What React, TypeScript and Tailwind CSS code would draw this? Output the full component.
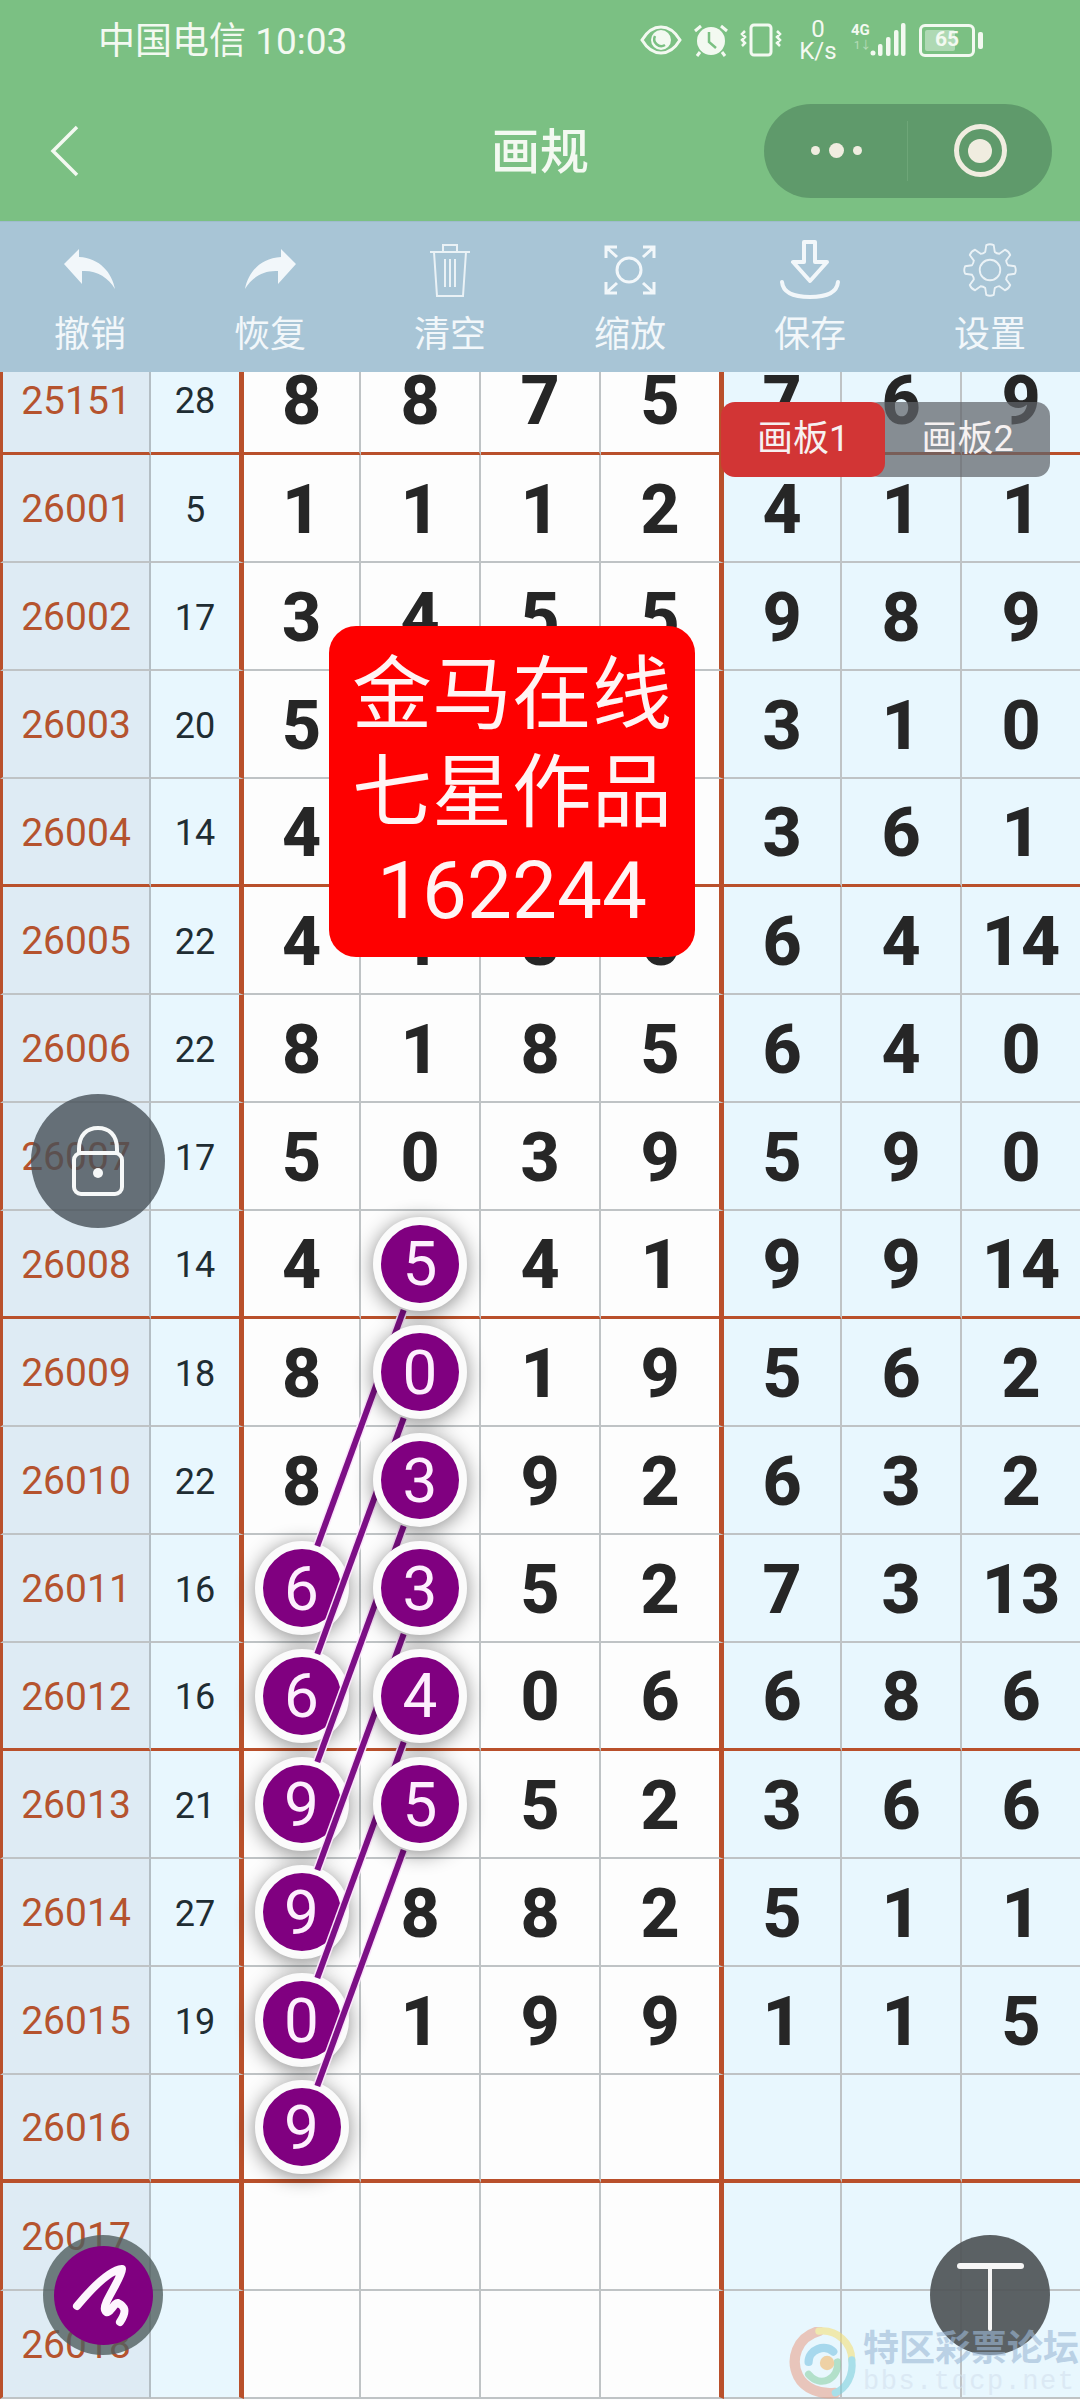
const rows: [string, string, string[]][] = [
  ['25151', '28', ['8', '8', '7', '5', '7', '6', '9']],
  ['26001', '5', ['1', '1', '1', '2', '4', '1', '1']],
  ['26002', '17', ['3', '4', '5', '5', '9', '8', '9']],
  ['26003', '20', ['5', '', '', '', '3', '1', '0']],
  ['26004', '14', ['4', '', '', '', '3', '6', '1']],
  ['26005', '22', ['4', '1', '8', '6', '6', '4', '14']],
  ['26006', '22', ['8', '1', '8', '5', '6', '4', '0']],
  ['26007', '17', ['5', '0', '3', '9', '5', '9', '0']],
  ['26008', '14', ['4', '*5', '4', '1', '9', '9', '14']],
  ['26009', '18', ['8', '*0', '1', '9', '5', '6', '2']],
  ['26010', '22', ['8', '*3', '9', '2', '6', '3', '2']],
  ['26011', '16', ['*6', '*3', '5', '2', '7', '3', '13']],
  ['26012', '16', ['*6', '*4', '0', '6', '6', '8', '6']],
  ['26013', '21', ['*9', '*5', '5', '2', '3', '6', '6']],
  ['26014', '27', ['*9', '8', '8', '2', '5', '1', '1']],
  ['26015', '19', ['*0', '1', '9', '9', '1', '1', '5']],
  ['26016', '', ['*9', '', '', '', '', '', '']],
  ['26017', '', ['', '', '', '', '', '', '']],
  ['26018', '', ['', '', '', '', '', '', '']],
];

// every ball in the right column joins the left column three rows further down
const links = [8, 9, 10, 11, 12, 13].map((r) => {
  const y = 347 + 108 * r + 55;
  return { x1: 420 - 16.3, y1: y + 44, x2: 301 + 16.3, y2: y + 324 - 44 };
});

// eight toothed gear outline, centred on 30,30
const gearPath = Array.from({ length: 8 }, (_, i) => {
  const a = (i * Math.PI) / 4;
  const pt = (r: number, d: number) =>
    `${(30 + r * Math.sin(a + d)).toFixed(1)} ${(30 - r * Math.cos(a + d)).toFixed(1)}`;
  return `${i === 0 ? 'M' : 'L'}${pt(20, -0.26)} L${pt(27, -0.15)} Q${pt(28.5, 0)} ${pt(27, 0.15)} L${pt(20, 0.26)} Q${pt(19, 0.39)} ${pt(20, 0.52)}`;
}).join(' ') + ' Z';

function Ball({ value, front }: { value: string; front?: boolean }) {
  return (
    <div
      className={`relative ${front ? 'z-30' : 'z-10'} flex h-[94px] w-[94px] items-center justify-center rounded-full border-[8px] border-[#fbfbfb] bg-[#800080] text-[62px] font-normal text-[#fdeffd] shadow-[0_3px_20px_rgba(0,0,0,0.45)]`}
    >
      {value}
    </div>
  );
}

function Row({ id, sum, cells, index }: { id: string; sum: string; cells: string[]; index: number }) {
  const thick = index % 4 === 0 && index <= 16;
  const bottom = thick ? 'border-b-4 border-b-[#b9502b]' : 'border-b-2 border-b-[#bfc3c5]';
  return (
    <div className="grid h-[108px] grid-cols-[151px_93px_117px_120px_120px_123px_118px_120px_118px]">
      <div className={`flex items-center justify-center border-l-[3px] border-r-2 border-l-[#b9502b] border-r-[#b4bec4] bg-[#deebf4] pt-[3px] text-[39px] text-[#b5532e] ${bottom}`}>
        {id}
      </div>
      <div className={`flex items-center justify-center border-r-[5px] border-r-[#b9502b] bg-[#e8f7fe] pt-[3px] text-[36px] text-[#1f2d33] ${bottom}`}>
        {sum}
      </div>
      {cells.map((c, i) => (
        <div
          key={i}
          className={`flex items-center justify-center text-[68px] font-extrabold text-[#262626] ${c.startsWith('*') ? '' : 'pt-[3px]'} ${bottom} ${i === 3 ? 'border-r-[5px] border-r-[#b9502b]' : i < 6 ? 'border-r-2 border-r-[#bfc3c5]' : ''} ${i >= 4 ? 'bg-[#e8f7fe]' : 'bg-[#fdfdfd]'}`}
        >
          {c.startsWith('*') ? <Ball value={c.slice(1)} front={i === 1} /> : c}
        </div>
      ))}
    </div>
  );
}

function StatusIcons() {
  return (
    <div className="flex items-center text-[#f3f9f1]">
      <svg width="42" height="30" viewBox="0 0 42 30" className="mr-[11px]">
        <path d="M2 15C8 5 14 2 21 2s13 3 19 13c-6 10-12 13-19 13S8 25 2 15Z" fill="none" stroke="currentColor" strokeWidth="3" />
        <circle cx="21" cy="15" r="10" fill="currentColor" />
        <path d="M15 11a7 7 0 0 0 10 9" fill="none" stroke="#7bc083" strokeWidth="2.5" />
      </svg>
      <svg width="36" height="34" viewBox="0 0 36 34" className="mr-[11px]">
        <circle cx="18" cy="18" r="14" fill="currentColor" />
        <path d="M16 9v10l7 6" fill="none" stroke="#7bc083" strokeWidth="2.5" />
        <path d="M2 8l6-5M34 8l-6-5M7 29l-3 4M29 29l3 4" stroke="currentColor" strokeWidth="3" />
      </svg>
      <svg width="42" height="34" viewBox="0 0 42 34" className="mr-[15px]">
        <rect x="11" y="2" width="20" height="30" rx="3" fill="none" stroke="currentColor" strokeWidth="3" />
        <path d="M5 8l-3 3 3 3-3 3 3 3-3 3M37 8l3 3-3 3 3 3-3 3 3 3" fill="none" stroke="currentColor" strokeWidth="2.5" />
      </svg>
      <div className="mr-[12px] flex w-[42px] flex-col items-center text-[24px] leading-[22px] font-normal">
        <span>0</span>
        <span>K/s</span>
      </div>
      <div className="relative mr-[12px] h-[34px] w-[56px]">
        <span className="absolute left-0 top-[-2px] text-[15px] leading-[18px] font-bold">4G</span>
        <span className="absolute left-[3px] top-[16px] text-[11px] leading-[14px] opacity-50">1↓</span>
        <svg width="56" height="34" viewBox="0 0 56 34" className="absolute left-0 top-0">
          <g fill="currentColor">
            <circle cx="22" cy="30" r="2.5" />
            <rect x="27" y="21" width="4.5" height="12" rx="2" />
            <rect x="35" y="14" width="4.5" height="19" rx="2" />
            <rect x="43" y="7" width="4.5" height="26" rx="2" />
            <rect x="50" y="0" width="4.5" height="33" rx="2" />
          </g>
        </svg>
      </div>
      <div className="relative flex h-[33px] w-[56px] items-center justify-center rounded-[6px] border-[3px] border-current text-[21px] font-bold">
        <div className="absolute bottom-[3px] left-[3px] top-[3px] w-[30px] rounded-[2px] bg-white/40" />
        <span className="relative">65</span>
      </div>
      <div className="ml-[3px] h-[17px] w-[5px] rounded-[2px] bg-current" />
    </div>
  );
}

const tools: [string, React.ReactNode][] = [
  [
    '撤销',
    <svg key="u" width="52" height="42" viewBox="0 0 52 42" fill="currentColor">
      <path d="M0 15L15 0V8C36 9 48 24 51 40C44 28 32 21 18 22V35Z" />
    </svg>,
  ],
  [
    '恢复',
    <svg key="r" width="52" height="42" viewBox="0 0 52 42" fill="currentColor">
      <path d="M52 15L37 0V8C16 9 4 24 1 40C8 28 20 21 34 22V35Z" />
    </svg>,
  ],
  [
    '清空',
    <svg key="c" width="42" height="56" viewBox="0 0 42 56" fill="none" stroke="currentColor" strokeWidth="2" opacity="0.9">
      <path d="M1 10H41M14 10V3H28V10M5 10L8 54H34L37 10M16 17V45M21 17V45M26 17V45" />
    </svg>,
  ],
  [
    '缩放',
    <svg key="s" width="54" height="52" viewBox="0 0 54 52" fill="none" stroke="currentColor" strokeWidth="3">
      <circle cx="26" cy="26" r="12" />
      <path d="M3 14V3H14M3 3L14 13M51 14V3H40M51 3L40 13M3 38V49H14M3 49L14 39M51 38V49H40M51 49L40 39" />
    </svg>,
  ],
  [
    '保存',
    <svg key="v" width="60" height="60" viewBox="0 0 60 60" fill="none" stroke="currentColor" strokeWidth="4">
      <path d="M24 2H35V22H47L30 41L13 22H24Z" strokeLinejoin="round" />
      <path d="M2 42C3 52 12 57 30 57S57 52 58 42" strokeLinecap="round" />
    </svg>,
  ],
  [
    '设置',
    <svg key="g" width="56" height="56" viewBox="0 0 60 60" fill="none" stroke="currentColor" strokeWidth="2" opacity="0.9">
      <path d={gearPath} strokeLinejoin="round" />
      <circle cx="30" cy="30" r="11" />
    </svg>,
  ],
];

function Swirl() {
  return (
    <svg width="72" height="72" viewBox="0 0 70 70" fill="none">
      <path d="M30 4C8 10 2 32 10 48C16 60 32 66 46 64" stroke="#e8a58f" strokeWidth="10" strokeLinecap="round" />
      <path d="M30 4C48 2 62 16 62 32" stroke="#f4e07a" strokeWidth="7" strokeLinecap="round" />
      <path d="M62 32C64 48 56 60 46 64" stroke="#7fd0dc" strokeWidth="7" strokeLinecap="round" />
      <path d="M20 46C32 60 50 50 48 34" stroke="#8fd1a8" strokeWidth="7" strokeLinecap="round" />
      <path d="M20 34C20 22 36 16 44 24" stroke="#7cc5e2" strokeWidth="8" strokeLinecap="round" />
      <circle cx="38" cy="35" r="7" fill="#f2b96b" />
    </svg>
  );
}

export default function App() {
  return (
    <div className="relative h-[2400px] w-[1080px] overflow-hidden bg-[#fdfdfd] font-['Roboto','Noto_Sans_CJK_SC',sans-serif]">
      {/* Header */}
      <header className="h-[221px] bg-[#7bc083] text-[#f3f9f1]">
        <div className="flex h-[80px] items-center justify-between pl-[98px] pr-[97px]">
          <span className="pt-[3px] text-[37px]">中国电信 10:03</span>
          <StatusIcons />
        </div>
        <div className="grid h-[141px] grid-cols-[1fr_auto_1fr] items-center">
          <div className="pl-[50px]">
            <svg width="30" height="52" viewBox="0 0 30 52" fill="none" stroke="currentColor" strokeWidth="3.5">
              <path d="M27 2L3 26L27 50" />
            </svg>
          </div>
          <h1 className="pt-[4px] text-[49px] font-medium">画规</h1>
          <div className="justify-self-end pr-[28px]">
            <div className="flex h-[94px] w-[288px] items-center rounded-full bg-[#5f9a6b]">
              <div className="flex h-[60px] w-[144px] items-center justify-center gap-[9px] border-r border-r-[#6ea678] pl-[2px]">
                <div className="h-[9px] w-[9px] rounded-full bg-[#f0ede0]" />
                <div className="h-[15px] w-[15px] rounded-full bg-[#f0ede0]" />
                <div className="h-[9px] w-[9px] rounded-full bg-[#f0ede0]" />
              </div>
              <div className="flex flex-1 items-center justify-center">
                <div className="flex h-[53px] w-[53px] items-center justify-center rounded-full border-[5px] border-[#f0ede0]">
                  <div className="h-[24px] w-[24px] rounded-full bg-[#f0ede0]" />
                </div>
              </div>
            </div>
          </div>
        </div>
      </header>

      {/* Toolbar */}
      <div className="grid h-[151px] grid-cols-6 border-t border-t-[#9fbccd] bg-[#a8c5d6] pt-[18px] text-[#f2f7fa]">
        {tools.map(([label, icon]) => (
          <div key={label} className="flex flex-col items-center">
            <div className="flex h-[60px] items-center justify-center">{icon}</div>
            <span className="mt-[15px] text-[36px] leading-[40px]">{label}</span>
          </div>
        ))}
      </div>

      {/* Chart */}
      <div className="h-[2028px] overflow-hidden">
        <div className="mt-[-25px]">
          {rows.map(([id, sum, cells], i) => (
            <Row key={id} id={id} sum={sum} cells={cells} index={i} />
          ))}
        </div>
      </div>

      <svg className="absolute left-0 top-0 z-20 h-[2400px] w-[1080px]" viewBox="0 0 1080 2400">
        {links.map((l, i) => (
          <g key={i}>
            <line {...l} stroke="#fbe6fb" strokeWidth="9" />
            <line {...l} stroke="#7d0f86" strokeWidth="6" />
          </g>
        ))}
      </svg>

      {/* Floating pieces */}
      <div className="absolute left-[721px] top-[402px] z-40 flex text-[36px] leading-[75px] text-[#f6f1f1]">
        <div className="relative z-10 h-[75px] w-[164px] rounded-[14px] bg-[#d23535] text-center">画板1</div>
        <div className="ml-[-20px] h-[75px] w-[185px] rounded-[14px] bg-[rgba(95,100,105,0.72)] pl-[20px] text-center">画板2</div>
      </div>

      <div className="absolute left-[329px] top-[626px] z-40 flex h-[331px] w-[366px] flex-col items-center justify-center rounded-[27px] bg-[#fe0000] pt-[2px] text-[80px] leading-[98px] text-[#fff4f4]">
        <span>金马在线</span>
        <span>七星作品</span>
        <span>162244</span>
      </div>

      <div className="absolute left-[31px] top-[1094px] z-40 flex h-[134px] w-[134px] items-center justify-center rounded-full bg-[rgba(70,80,88,0.8)]">
        <svg width="54" height="72" viewBox="0 0 54 72" fill="none" stroke="#f6f8f8" strokeWidth="4">
          <path d="M8 28V24C8 10 16 3 27 3S46 10 46 24V28" />
          <rect x="3" y="28" width="48" height="41" rx="7" />
          <circle cx="27" cy="48" r="5" fill="#f6f8f8" stroke="none" />
        </svg>
      </div>

      <div className="absolute left-[43px] top-[2235px] z-40 flex h-[120px] w-[120px] items-center justify-center rounded-full bg-[rgba(80,95,95,0.8)]">
        <div className="h-[99px] w-[99px] rounded-full bg-[#800080]">
          <svg width="99" height="99" viewBox="0 0 99 99" fill="none" stroke="#fdf5fd" strokeWidth="8" strokeLinecap="round" strokeLinejoin="round">
            <path d="M23 60C38 42 56 24 68 23C68 32 48 58 51 64C54 72 60 56 64 57C70 60 74 64 66 76" />
          </svg>
        </div>
      </div>

      <div className="absolute left-[930px] top-[2235px] z-40 flex h-[120px] w-[120px] flex-col items-center rounded-full bg-[rgba(80,85,88,0.93)] pt-[28px]">
        <div className="h-[6px] w-[67px] rounded-full bg-[#f6f6f6]" />
        <div className="h-[62px] w-[4px] rounded-b-full bg-[#f6f6f6]" />
      </div>

      <div className="absolute left-[788px] top-[2327px] z-50 flex opacity-60">
        <Swirl />
        <div className="ml-[3px] flex flex-col">
          <span className="text-[36px] leading-[44px] font-bold text-[#9db8d6]">特区彩票论坛</span>
          <span className="font-['Liberation_Mono',monospace] text-[27px] leading-[22px] tracking-[1.5px] text-[#d4e1ee]">bbs.tqcp.net</span>
        </div>
      </div>
    </div>
  );
}
